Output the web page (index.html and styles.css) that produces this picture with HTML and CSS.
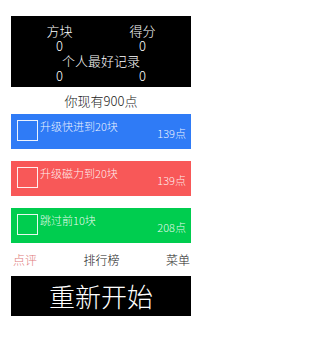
FILE: index.html
```html
<!DOCTYPE html>
<html lang="zh-CN">
<head>
<meta charset="utf-8">
<link rel="stylesheet" href="styles.css">
</head>
<body>
<div class="page">
  <div class="score">
    <div class="cols">
      <div class="cell">方块</div>
      <div class="cell">得分</div>
      <div class="cell">0</div>
      <div class="cell">0</div>
    </div>
    <div class="best">个人最好记录</div>
    <div class="cols">
      <div class="cell">0</div>
      <div class="cell">0</div>
    </div>
  </div>
  <div class="points">你现有900点</div>
  <div class="bars">
    <div class="bar blue">
      <span class="box"></span>
      <span class="label">升级快进到20块</span>
      <span class="price">139点</span>
    </div>
    <div class="bar red">
      <span class="box"></span>
      <span class="label">升级磁力到20块</span>
      <span class="price">139点</span>
    </div>
    <div class="bar green">
      <span class="box"></span>
      <span class="label">跳过前10块</span>
      <span class="price">208点</span>
    </div>
  </div>
  <div class="nav">
    <span class="nav-item rate">点评</span>
    <span class="nav-item">排行榜</span>
    <span class="nav-item">菜单</span>
  </div>
  <div class="restart">重新开始</div>
</div>
</body>
</html>
```
FILE: styles.css
```css
html, body {
  margin: 0;
  padding: 0;
  background: #ffffff;
}
body {
  font-family: "Noto Sans CJK SC", "Noto Sans", sans-serif;
  font-weight: 300;
  color: #222;
}
.page {
  padding: 16px 11px 0;
  width: 180px;
}
.score {
  background: #000;
  color: #fff;
  height: 71px;
  box-sizing: border-box;
  padding: 7px 7px 0;
  font-size: 13px;
}
.cols {
  display: grid;
  grid-template-columns: 1fr 1fr;
  text-align: center;
  line-height: 15px;
}
.best {
  text-align: center;
  line-height: 15px;
}
.points {
  height: 27px;
  line-height: 27px;
  text-align: center;
  font-size: 13px;
  color: #222;
}
.bars {
  display: flex;
  flex-direction: column;
  gap: 12px;
}
.bar {
  height: 35px;
  box-sizing: border-box;
  display: flex;
  align-items: flex-start;
  padding: 6px 5px 0 6px;
  color: rgba(255, 255, 255, 0.92);
}
.blue { background: #2f7bf6; }
.red { background: #f85858; }
.green { background: #00cd4f; }
.box {
  width: 21px;
  height: 21px;
  box-sizing: border-box;
  border: 1.5px solid rgba(255, 255, 255, 0.9);
  flex: none;
}
.label {
  margin-left: 2px;
  font-size: 11px;
  line-height: 13px;
}
.price {
  margin-left: auto;
  margin-top: 7px;
  font-size: 11px;
  line-height: 13px;
}
.nav {
  display: flex;
  justify-content: space-between;
  align-items: center;
  height: 33px;
  padding: 0 1px 0 2px;
  font-size: 12px;
}
.nav-item { color: #222; }
.rate { color: #e07a7a; }
.restart {
  background: #000;
  color: #fff;
  height: 40px;
  line-height: 40px;
  text-align: center;
  font-size: 26px;
  font-weight: 300;
}
```
